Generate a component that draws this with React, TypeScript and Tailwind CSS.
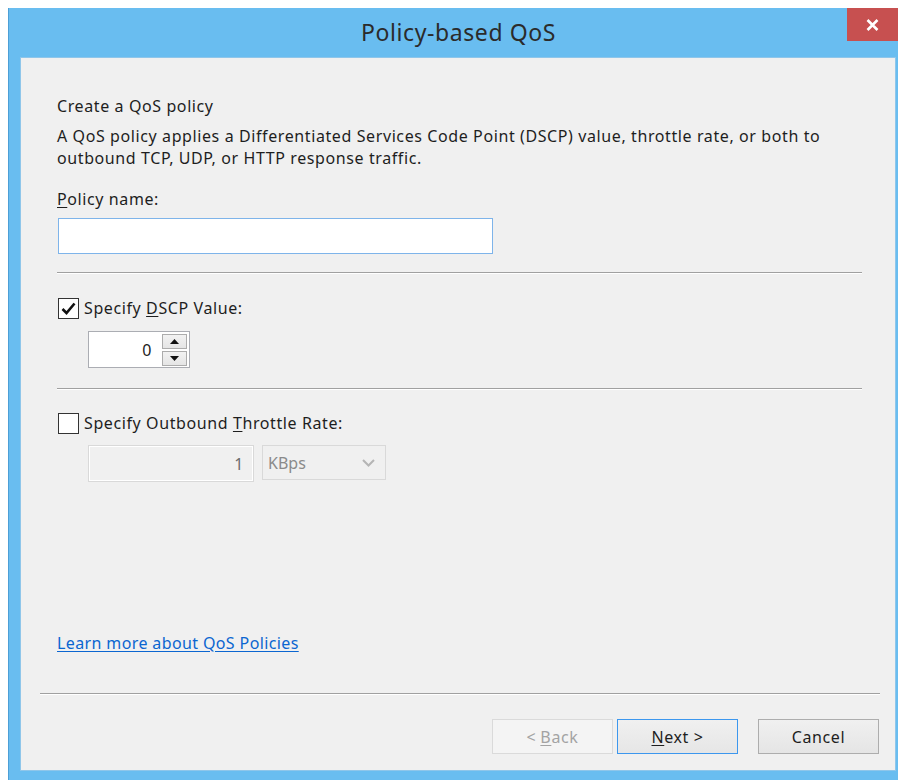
import React from "react";

const FONT = { fontFamily: '"Noto Sans", "Open Sans", "Liberation Sans", sans-serif' };

function Rule({ className = "" }: { className?: string }) {
  return <div className={`h-[2px] border-t border-[#a0a0a0] border-b border-b-white ${className}`} />;
}

function CheckBox({ checked }: { checked: boolean }) {
  return (
    <div className="w-[21px] h-[21px] border border-[#333333] bg-white flex items-center justify-center shrink-0">
      {checked && (
        <svg width="15" height="13" viewBox="0 0 15 13">
          <path d="M1.5 7 L5.5 11 L13.5 1.5" fill="none" stroke="#111" strokeWidth="2.6" />
        </svg>
      )}
    </div>
  );
}

function Spin({ up }: { up: boolean }) {
  return (
    <div className="w-[25px] h-[15px] border border-[#acacac] bg-gradient-to-b from-[#f2f2f2] to-[#e5e5e5] flex items-center justify-center">
      <svg width="9" height="5" viewBox="0 0 9 5">
        {up ? <path d="M0 5 L4.5 0 L9 5 Z" fill="#111" /> : <path d="M0 0 L4.5 5 L9 0 Z" fill="#111" />}
      </svg>
    </div>
  );
}

export default function App() {
  return (
    <div className="w-[898px] h-[780px] overflow-hidden bg-white pt-[8px] pl-[8px] text-[#1e1e1e]" style={FONT}>
      <div className="relative w-[890px] h-[772px] bg-[#69bdf0] border-l border-[#4d9fd6] flex flex-col">
        {/* title bar */}
        <div className="h-[49px] flex items-center justify-center pl-[10px]">
          <span className="text-[23px] tracking-[0.6px] text-[#2b2b2b]">Policy-based QoS</span>
        </div>
        <div className="absolute top-0 right-0 w-[51px] h-[33px] bg-[#c75050] flex items-center justify-center">
          <svg width="13" height="12" viewBox="0 0 13 12">
            <path d="M1.5 1 L11.5 11 M11.5 1 L1.5 11" stroke="#fff" strokeWidth="2.6" />
          </svg>
        </div>

        {/* client area */}
        <div className="ml-[11px] w-[876px] h-[714px] bg-[#f0f0f0] border border-[#8fc6ea] flex flex-col text-[16px] tracking-[0.6px]">
          <div className="pl-[36px] pr-[20px] flex flex-col">
            <div className="mt-[37px] leading-[22px]">Create a QoS policy</div>
            <div className="mt-[8px] leading-[22px] whitespace-nowrap">
              A QoS policy applies a Differentiated Services Code Point (DSCP) value, throttle rate, or both to
              <br />
              outbound TCP, UDP, or HTTP response traffic.
            </div>
            <div className="mt-[19px] leading-[22px]">
              <span className="underline underline-offset-2">P</span>olicy name:
            </div>
            <div className="mt-[8px] ml-[1px] w-[435px] h-[36px] bg-white border border-[#7eb4ea]" />
            <Rule className="mt-[18px] w-[805px]" />

            <div className="mt-[23px] ml-[1px] flex items-center gap-[5px] h-[22px]">
              <CheckBox checked />
              <span>
                Specify <span className="underline underline-offset-2">D</span>SCP Value:
              </span>
            </div>
            <div className="mt-[12px] ml-[31px] w-[102px] h-[37px] bg-white border border-[#abadb3] flex items-center">
              <div className="flex-1 text-right pr-[10px] text-[#222]">0</div>
              <div className="flex flex-col gap-[2px] pr-[2px]">
                <Spin up />
                <Spin up={false} />
              </div>
            </div>
            <Rule className="mt-[20px] w-[805px]" />

            <div className="mt-[22px] ml-[1px] flex items-center gap-[5px] h-[22px]">
              <CheckBox checked={false} />
              <span>
                Specify Outbound <span className="underline underline-offset-2">T</span>hrottle Rate:
              </span>
            </div>
            <div className="mt-[11px] ml-[31px] flex gap-[8px]">
              <div className="w-[166px] h-[37px] border border-[#d9d9d9] bg-[#f0f0f0] shadow-[inset_0_0_0_1px_#ffffff] flex items-center justify-end pr-[9px] text-[#6d6d6d]">
                1
              </div>
              <div className="w-[124px] h-[35px] border border-[#d9d9d9] bg-[#f0f0f0] flex items-center justify-between pl-[5px] pr-[10px] text-[#8a8a8a] tracking-normal">
                <span>KBps</span>
                <svg width="13" height="8" viewBox="0 0 13 8">
                  <path d="M1 1 L6.5 6.5 L12 1" fill="none" stroke="#b5b5b5" strokeWidth="2" />
                </svg>
              </div>
            </div>
          </div>

          <div className="mt-[150px] pl-[36px] leading-[22px] tracking-[0.38px]">
            <span className="text-[#0b66d1] underline underline-offset-2 cursor-pointer">Learn more about QoS Policies</span>
          </div>

          <Rule className="mt-[39px] ml-[19px] w-[840px]" />

          <div className="mt-[24px] flex pl-[471px] h-[35px]">
            <div className="w-[121px] h-[35px] border border-[#dadada] bg-[#f4f4f4] flex items-center justify-center text-[#a3a3a3]">
              &lt; <span className="underline underline-offset-2 ml-[4px]">B</span>ack
            </div>
            <div className="ml-[4px] w-[121px] h-[35px] border border-[#3c97ee] bg-gradient-to-b from-[#f0f0f0] to-[#e6e6e6] flex items-center justify-center">
              <span className="underline underline-offset-2">N</span>ext &gt;
            </div>
            <div className="ml-[20px] w-[121px] h-[35px] border border-[#adadad] bg-gradient-to-b from-[#f0f0f0] to-[#e5e5e5] flex items-center justify-center">
              Cancel
            </div>
          </div>
        </div>
      </div>
    </div>
  );
}
